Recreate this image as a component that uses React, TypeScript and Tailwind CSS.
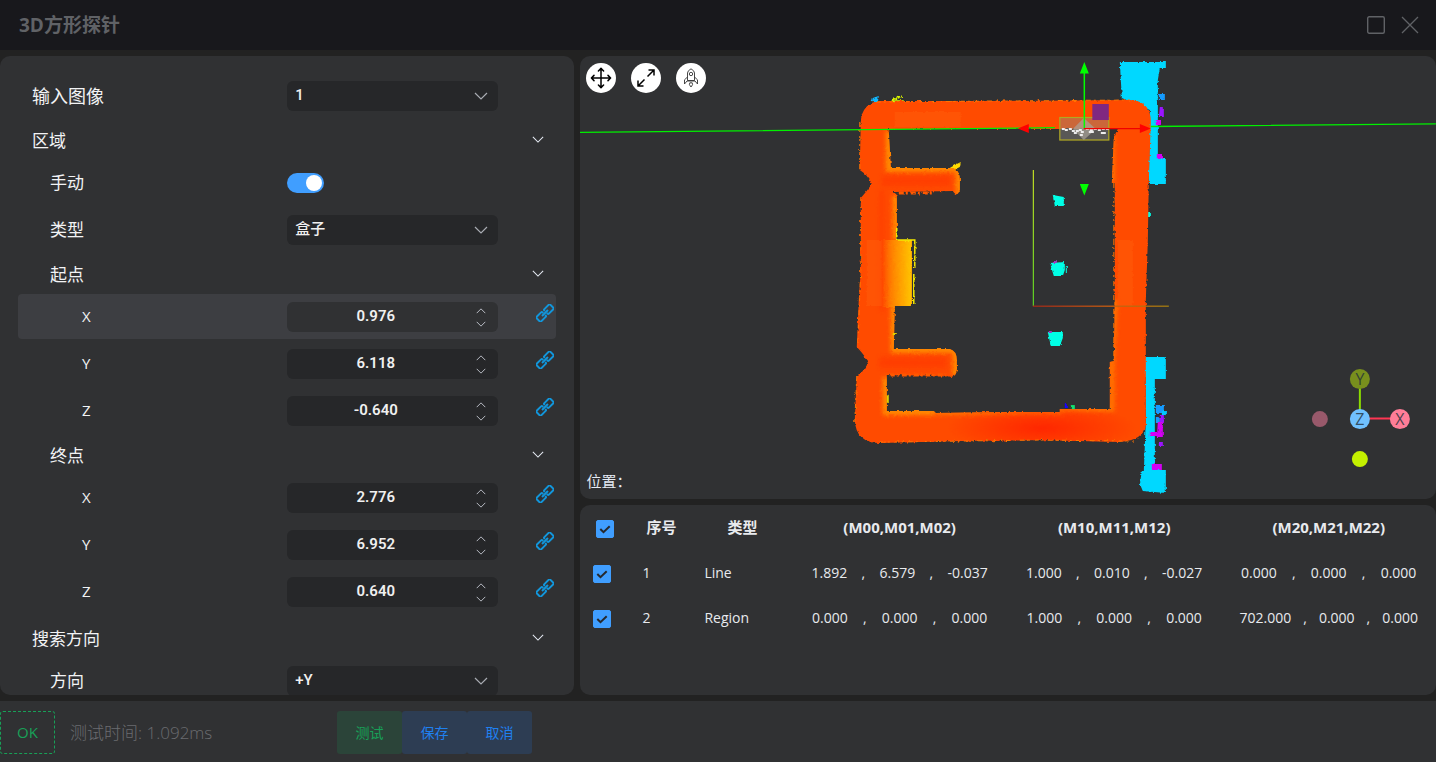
import React, { useId, useState } from "react";

const CJK = "font-['Open_Sans','Noto_Sans_CJK_SC',sans-serif]";
const CONTROL_FONT = "font-['Roboto','Noto_Sans_CJK_SC',sans-serif]";

function Chevron({ className, up = false }: { className: string; up?: boolean }) {
  return (
    <svg viewBox="0 0 14 8" className={className} fill="none" stroke="currentColor" strokeWidth="1.2" aria-hidden="true">
      <path d={up ? "M1 7 L7 1 L13 7" : "M1 1 L7 7 L13 1"} />
    </svg>
  );
}

function LinkIcon() {
  return (
    <svg viewBox="0 0 18 18" className="size-[18px]" fill="none" stroke="#1296db" strokeWidth="2" aria-hidden="true">
      <g transform="rotate(-45 9 9)">
        <path d="M7.700 7.800 V6.800 Q7.700 5.800 6.700 5.800 H0.400 Q-0.600 5.800 -0.600 6.800 V11.200 Q-0.600 12.200 0.400 12.200 H6.700 Q7.700 12.200 7.700 11.200 V10.600" />
        <path d="M10.300 10.200 V11.200 Q10.300 12.200 11.300 12.200 H17.600 Q18.600 12.200 18.600 11.200 V6.800 Q18.600 5.800 17.600 5.800 H11.300 Q10.300 5.800 10.300 6.800 V7.400" />
        <path d="M4.800 9 H13.200" />
      </g>
    </svg>
  );
}

type RowProps = { label: string; id: string; level?: number; active?: boolean; linked?: boolean; children: React.ReactNode };

function Row({ label, id, level = 1, active, linked, children }: RowProps) {
  const pad = level === 0 ? "pl-[14px] text-lg" : level === 1 ? "pl-8 text-[17px]" : "pl-16 text-[15px]";
  return (
    <div className={`grid h-[45px] shrink-0 grid-cols-2 items-center rounded ${active ? "bg-[#3d3e42]" : ""}`}>
      <label htmlFor={id} className={pad}>{label}</label>
      <div className="flex items-center">
        <div className="min-w-0 flex-1">{children}</div>
        <div className="flex w-[58px] justify-end pr-[2px] pb-2">
          {linked && (
            <button type="button" aria-label={`${label} 链接`}><LinkIcon /></button>
          )}
        </div>
      </div>
    </div>
  );
}

function SelectRow({ label, options, level }: { label: string; options: string[]; level?: number }) {
  const id = useId();
  return (
    <Row label={label} id={id} level={level}>
      <div className="grid items-center">
        <select id={id} className={`col-start-1 row-start-1 h-[30px] w-full appearance-none rounded-md bg-[#262729] pr-8 pl-2 text-[15px] font-medium text-[#f0f0f0] outline-none ${CONTROL_FONT}`}>
          {options.map((o) => <option key={o}>{o}</option>)}
        </select>
        <Chevron className="pointer-events-none col-start-1 row-start-1 mr-[10px] h-2 w-[14px] justify-self-end text-[#a8abb2]" />
      </div>
    </Row>
  );
}

function NumberRow({ label, initial, active }: { label: string; initial: string; active?: boolean }) {
  const id = useId();
  const [value, setValue] = useState(initial);
  const step = (d: number) => setValue((Number(value) + d).toFixed(3));
  return (
    <Row label={label} id={id} level={2} active={active} linked>
      <div className={`flex h-[30px] items-center rounded-md ${active ? "bg-[#303133]" : "bg-[#262729]"}`}>
        <input
          id={id}
          inputMode="decimal"
          value={value}
          onChange={(e) => setValue(e.target.value)}
          className={`w-0 min-w-0 flex-1 bg-transparent text-center text-[15px] font-semibold text-[#f0f0f0] outline-none ${CONTROL_FONT}`}
        />
        <div className="flex w-[34px] flex-col items-center gap-[7px] pt-px text-[#cfd3dc]">
          <button type="button" aria-label="增加" onClick={() => step(0.001)}><Chevron up className="block h-[6px] w-[10px]" /></button>
          <button type="button" aria-label="减少" onClick={() => step(-0.001)}><Chevron className="block h-[6px] w-[10px]" /></button>
        </div>
      </div>
    </Row>
  );
}

function GroupHeader({ label, level = 0 }: { label: string; level?: number }) {
  return (
    <button type="button" aria-expanded="true" className={`flex h-[42px] w-full items-center justify-between pr-3 text-[17px] ${level === 0 ? "pl-[14px]" : "pl-8"}`}>
      <span className="pt-[3px]">{label}</span>
      <Chevron className="h-[7px] w-3 text-[#e5eaf3]" />
    </button>
  );
}

function Fields({ children }: { children: React.ReactNode }) {
  return <div className="flex flex-col gap-[2px]">{children}</div>;
}

function ParameterPanel() {
  const manual = useId();
  return (
    <section className="w-2/5 shrink-0 overflow-hidden rounded-[10px] bg-[#303133] px-[18px] pt-[17px]">
      <SelectRow label="输入图像" options={["1"]} level={0} />
      <GroupHeader label="区域" />
      <Fields>
        <Row label="手动" id={manual}>
          <label className="flex h-5 w-[37px] items-center rounded-full bg-[#626366] p-[2px] has-checked:justify-end has-checked:bg-[#409eff]">
            <input id={manual} type="checkbox" role="switch" defaultChecked className="size-4 appearance-none rounded-full bg-white" />
          </label>
        </Row>
        <SelectRow label="类型" options={["盒子"]} />
      </Fields>
      <GroupHeader label="起点" level={1} />
      <Fields>
        <NumberRow label="X" initial="0.976" active />
        <NumberRow label="Y" initial="6.118" />
        <NumberRow label="Z" initial="-0.640" />
      </Fields>
      <GroupHeader label="终点" level={1} />
      <Fields>
        <NumberRow label="X" initial="2.776" />
        <NumberRow label="Y" initial="6.952" />
        <NumberRow label="Z" initial="0.640" />
      </Fields>
      <div className="pt-[2px]">
        <GroupHeader label="搜索方向" />
        <SelectRow label="方向" options={["+Y"]} />
      </div>
    </section>
  );
}

const FRAME =
  "M861 122 Q862 103 880 101 L1000 101 L1130 100 Q1151 101 1151 122 L1149 180 L1148 240 L1146 300 V425 Q1144 440 1120 442 L1040 440 L960 441 L880 443 Q856 443 855 420 L857 376 Q863 373 869 362 Q862 352 857 347 L859 300 L861 270 V198 Q868 190 872 184 Q868 175 860 170 Z " +
  "M885 129 L889 131 L891 168 H953 Q960 170 960 180 V190 Q957 198 953 191 L893 192 L897 196 V240 H912 V306 H895 L894 349 H950 Q957 351 957 360 V370 Q956 379 948 376 L887 375 V411 H934 L936 413 L1000 412 H1060 V409 H1110 V362 L1114 361 L1115 300 V183 H1112 L1114 137 L1118 129 Z";

const SCAN_DOTS = [
  [1062, 128], [1065, 129], [1069, 128], [1072, 130], [1076, 130], [1079, 129], [1074, 132], [1081, 131], [1080, 134],
  [1086, 128], [1090, 129], [1094, 128], [1098, 129], [1102, 128], [1106, 128], [1089, 131], [1101, 132], [1103, 132], [1091, 131],
];

function PointCloud() {
  return (
    <svg viewBox="580 56 856 443" preserveAspectRatio="xMidYMid slice" className="col-start-1 row-start-1 block h-full min-h-0 w-full" role="img" aria-label="点云">
      <defs>
        <filter id="rough" x="-5%" y="-5%" width="110%" height="110%" colorInterpolationFilters="sRGB">
          <feTurbulence type="fractalNoise" baseFrequency="0.3" numOctaves="2" seed="4" result="n" />
          <feDisplacementMap in="SourceGraphic" in2="n" scale="3" xChannelSelector="R" yChannelSelector="G" />
        </filter>
        <filter id="soft"><feGaussianBlur stdDeviation="2" /></filter>
        <linearGradient id="shelf" x1="0" x2="1"><stop offset="0" stopColor="#ff5200" /><stop offset="0.4" stopColor="#ff8c00" /><stop offset="1" stopColor="#ffcc00" /></linearGradient>
        <radialGradient id="hot"><stop offset="0" stopColor="#ff2000" /><stop offset="1" stopColor="#ff2000" stopOpacity="0" /></radialGradient>
        <linearGradient id="axisY" x1="0" y1="0" x2="0" y2="1"><stop offset="0" stopColor="#e0ff20" /><stop offset="1" stopColor="#60f020" /></linearGradient>
        <linearGradient id="axisX" gradientUnits="userSpaceOnUse" x1="1033" y1="0" x2="1169" y2="0"><stop offset="0" stopColor="#a02818" /><stop offset="0.6" stopColor="#c86010" /><stop offset="1" stopColor="#a07c10" /></linearGradient>
        <clipPath id="frameClip"><path d={FRAME} clipRule="evenodd" /></clipPath>
      </defs>
      <g filter="url(#rough)">
        <path fill="#00d8ff" d="M1120 62 H1166 V68 H1160 L1158 80 V158 H1166 V184 H1149 L1150 110 L1122 98 Z M1143 357 H1166 V379 H1155 V470 H1166 V493 L1143 491 L1140 484 L1142 471 H1144 L1146 420 V378 H1143 Z" />
        <path fill="#159bff" d="M1159 94 h6 v6 h-6z M1156 405 h8 v8 h-8z M1156 417 h4 v6 h-4z" />
        <path fill="#00c8ff" d="M1162 411 h5 v4 h-5z" />
        <path fill="#9b14ff" d="M1160 107 h4 v10 h-5z M1160 415 h4 v8 h-4z M1159 442 h4 v4 h-4z" />
        <path fill="#d400f5" d="M1156 120 h6 v5 h-6z M1157 154 h6 v5 h-6z M1158 422 h5 v15 h-6z M1150 432 h8 v4 h-8z M1152 464 l10 0 v6 h-10z" />
        <path fill="#00ffe6" d="M1053 195 L1064 197 V206 H1055 Z M1050 263 L1065 262 V270 L1063 276 H1054 Z M1048 332 H1063 V338 L1060 346 H1051 Z M1066 266 v7 h1 v-7z M1148 212 h3 v5 h-3z" />
        <path fill="#a038c0" d="M1053 261 h4 v2 h-4z M1049 331 h3 v2 h-3z" />
        <path fill="#10b8ff" d="M873 98 l6 -2 l-1 7 l-6 -1z" />
        <path fill="none" stroke="#d8f400" strokeWidth="1.6" d="M891 101 L904 101 M892 100 L902 96 M896 101 L898 96" />
        <path fill="#ffdc00" d="M950 168 L955 165 L961 162 L960 167 L954 170 Z" />
        <path fill="#ff4b00" fillRule="evenodd" d={FRAME} />
        <g clipPath="url(#frameClip)">
          <rect x="882" y="240" width="32" height="67" fill="url(#shelf)" />
          <path fill="none" stroke="#ff8a00" strokeWidth="8" filter="url(#soft)" d="M890 131 V168 H960 V196 M897 196 V240 M895 306 V349 H957 V376 M887 377 V411 H936" />
          <path fill="none" stroke="#ff7800" strokeWidth="5" filter="url(#soft)" d="M936 412 H1060 V409 H1112 V361 L1115 300 M1112 183 V135" />
          <ellipse cx="1042" cy="428" rx="95" ry="24" fill="url(#hot)" opacity="0.85" />
          <path fill="#ff3600" opacity="0.55" filter="url(#soft)" d="M882 176 H950 V186 H882z M880 357 H946 V368 H880z M880 190 h4 v120 h-4z" />
          <path fill="#ff5a08" opacity="0.6" d="M895 112 h66 v15 h-66z M867 240 h15 v66 h-15z M1118 240 h15 v66 h-15z" />
        </g>
        <path fill="none" stroke="#ff7400" strokeWidth="1" strokeDasharray="5 3 2 4" d="M876 102 L1000 101 L1130 100 M860 122 V170 M861 198 V270 L858 346 M857 376 L855 422 M880 442 L1040 440 L1135 441 M1114 183 V360" />
        <path fill="none" stroke="#ff5800" strokeWidth="3" strokeDasharray="5 2 2 3" d="M899 193 H934 M890 375 H952" />
        <path fill="none" stroke="#f4ea00" strokeWidth="1.5" d="M897 228 V240 H915 V268 M914 274 V304" />
        <path fill="#e0d000" d="M887 394 l2 1 v8 h-2z M894 333 h3 v2 h-3z" />
        <path fill="#1800ff" d="M1065 404 h3 v4 h-3z" />
        <path fill="#10e070" d="M1071 405 h4 v4 h-4z" />
      </g>
      <rect x="1033" y="170" width="1" height="136" fill="url(#axisY)" />
      <rect x="1033" y="305.5" width="136" height="1.3" fill="url(#axisX)" />
      <path d="M580 132.3 L1055 127.7 M1151 126.5 L1436 123.8" stroke="#00f000" strokeWidth="1.3" fill="none" />
      <rect x="1060" y="117.5" width="49" height="22.5" fill="#8b8a80" fillOpacity="0.45" stroke="#b0a824" strokeWidth="1.2" />
      <path fill="#aaa49a" fillOpacity="0.7" d="M1084 118 L1096 129 L1084 140 L1073 129 Z" />
      <g fill="#eeeeee">{SCAN_DOTS.map(([x, y]) => <rect key={`${x}-${y}`} x={x} y={y} width="3" height="2" />)}</g>
      <path d="M1084.5 128 V72" stroke="#00ff00" strokeWidth="1.5" />
      <path d="M1084.5 62 L1089 73.5 H1080 Z M1084.5 195.5 L1089 184 H1080 Z" fill="#00ff00" />
      <path d="M1084 128.7 H1142" stroke="#f00000" strokeWidth="1.3" />
      <path d="M1151 128.5 L1140 124 V133 Z M1018 128.5 L1029 124 V133 Z" fill="#ff0000" />
      <rect x="1092.5" y="104" width="16.5" height="16" fill="#802880" />
      <path d="M1360 388 V410" stroke="#8adb00" strokeWidth="2" />
      <path d="M1368 418.5 H1392" stroke="#ff3653" strokeWidth="2" />
      <circle cx="1320" cy="419" r="8" fill="#98596b" />
      <circle cx="1360" cy="459" r="8" fill="#c4f000" />
      <circle cx="1360" cy="379" r="10" fill="#788f1d" />
      <circle cx="1360" cy="419" r="10" fill="#70c1ff" />
      <circle cx="1400" cy="419" r="10" fill="#ff7d97" />
      <g className="font-['Open_Sans',sans-serif] text-base" fill="#22303a" fillOpacity="0.8" textAnchor="middle">
        <text x="1360" y="385">Y</text>
        <text x="1360" y="425">Z</text>
        <text x="1400" y="425">X</text>
      </g>
    </svg>
  );
}

function RoundButton({ label, children }: { label: string; children: React.ReactNode }) {
  return (
    <button type="button" aria-label={label} className="flex size-[30px] items-center justify-center rounded-full bg-white text-black">
      {children}
    </button>
  );
}

function Viewer() {
  return (
    <section className="grid min-h-0 flex-[7] grid-cols-1 grid-rows-1 overflow-hidden rounded-[10px] bg-[#303133]">
      <PointCloud />
      <div className="z-10 col-start-1 row-start-1 flex flex-col justify-between px-[6px] py-[7px]">
        <div className="flex gap-[15px]">
          <RoundButton label="移动">
            <svg viewBox="0 0 22 22" className="size-[22px]" fill="none" stroke="currentColor" strokeWidth="1.5" strokeLinecap="round" strokeLinejoin="round">
              <path d="M11 1.5 V20.5 M1.5 11 H20.5 M8.4 4 L11 1.4 L13.6 4 M8.4 18 L11 20.6 L13.6 18 M4 8.4 L1.4 11 L4 13.6 M18 8.4 L20.6 11 L18 13.6" />
            </svg>
          </RoundButton>
          <RoundButton label="全屏">
            <svg viewBox="0 0 20 20" className="size-5" fill="none" stroke="currentColor" strokeWidth="1.5">
              <path d="M12.5 2 H18 V7.5 M18 2 L11.5 8.5 M7.5 18 H2 V12.5 M2 18 L8.5 11.5" />
            </svg>
          </RoundButton>
          <RoundButton label="重置视角">
            <svg viewBox="0 0 20 22" className="h-[22px] w-5" fill="none" stroke="#333333" strokeWidth="0.9" strokeLinejoin="round">
              <path d="M6.5 13.5 V6 Q6.5 3.8 10 1.8 Q13.5 3.8 13.5 6 V13.5 Z" />
              <circle cx="10" cy="7" r="1.7" />
              <path d="M6.5 10 L3.5 12.8 V17 L6 14 H14 L16.5 17 V12.8 L13.5 10" />
              <path d="M8.8 15.8 Q7.5 17.5 10 20 Q12.5 17.5 11.2 15.8 Z" />
            </svg>
          </RoundButton>
        </div>
        <p className="text-[15px] leading-[22px] text-[#e5eaf3]">位置：</p>
      </div>
    </section>
  );
}

const RESULTS = [
  { no: 1, type: "Line", m: [["1.892", "6.579", "-0.037"], ["1.000", "0.010", "-0.027"], ["0.000", "0.000", "0.000"]] },
  { no: 2, type: "Region", m: [["0.000", "0.000", "0.000"], ["1.000", "0.000", "0.000"], ["702.000", "0.000", "0.000"]] },
];

function Check({ label }: { label: string }) {
  return (
    <span className="inline-grid align-middle">
      <input type="checkbox" defaultChecked aria-label={label} className="peer col-start-1 row-start-1 size-[18px] appearance-none rounded-[2px] border border-[#6c6e72] checked:border-[#409eff] checked:bg-[#409eff]" />
      <svg viewBox="0 0 18 18" className="pointer-events-none invisible col-start-1 row-start-1 size-[18px] peer-checked:visible" fill="none" stroke="#26292e" strokeWidth="2" aria-hidden="true">
        <path d="M4.3 9 L7.5 12.2 L13.7 6.2" />
      </svg>
    </span>
  );
}

function ResultTable() {
  return (
    <section className="min-h-0 flex-[3] overflow-hidden rounded-[10px] bg-[#303133] text-sm text-[#e8eaee]">
      <table className="w-full table-fixed border-collapse">
        <colgroup>
          <col className="w-[50px]" />
          <col className="w-[62px]" />
          <col className="w-[100px]" />
          <col /><col /><col />
        </colgroup>
        <thead>
          <tr className="h-[45px] text-[15px] font-bold">
            <th><Check label="全选" /></th>
            <th>序号</th>
            <th>类型</th>
            <th>(M00,M01,M02)</th>
            <th>(M10,M11,M12)</th>
            <th>(M20,M21,M22)</th>
          </tr>
        </thead>
        <tbody>
          {RESULTS.map((r) => (
            <tr key={r.no} className="h-[45px]">
              <td className="pl-[13px]"><Check label={`选择 ${r.no}`} /></td>
              <td className="pl-3">{r.no}</td>
              <td className="pl-3">{r.type}</td>
              {r.m.map((v, i) => (
                <td key={i} className="px-3">
                  <div className="flex justify-around">
                    <span>{v[0]}</span><span>,</span><span>{v[1]}</span><span>,</span><span>{v[2]}</span>
                  </div>
                </td>
              ))}
            </tr>
          ))}
        </tbody>
      </table>
    </section>
  );
}

export default function App() {
  return (
    <div className={`flex h-screen flex-col overflow-hidden bg-[#222222] text-[#f2f3f5] ${CJK}`}>
      <header className="flex h-[50px] shrink-0 items-center justify-between bg-[#18181c] pr-[17px] pl-[19px] text-[#606266]">
        <h1 className="text-[19px] font-bold">3D方形探针</h1>
        <div className="flex gap-4">
          <button type="button" aria-label="最大化">
            <svg viewBox="0 0 18 18" className="size-[18px]" fill="none" stroke="currentColor" strokeWidth="1.4"><rect x="0.7" y="0.7" width="16.6" height="16.6" rx="1.5" /></svg>
          </button>
          <button type="button" aria-label="关闭">
            <svg viewBox="0 0 18 18" className="size-[18px]" fill="none" stroke="currentColor" strokeWidth="1.3"><path d="M1 1 L17 17 M17 1 L1 17" /></svg>
          </button>
        </div>
      </header>
      <main className="flex min-h-0 flex-1 gap-[6px] py-[6px]">
        <ParameterPanel />
        <div className="flex min-w-0 flex-1 flex-col gap-[6px]">
          <Viewer />
          <ResultTable />
        </div>
      </main>
      <footer className="flex h-[61px] shrink-0 items-center bg-[#303133] pt-[2px]">
        <div className="flex w-[337px] items-center gap-[15px]">
          <output className="flex h-[43px] w-[55px] items-center justify-center rounded-[3px] border border-dashed border-[#18a058] text-[15px] text-[#18a058]">OK</output>
          <span className="text-[17px] font-light text-[#6b6c70]">测试时间: 1.092ms</span>
        </div>
        <button type="button" className="h-[43px] w-[65px] rounded-[3px] bg-[#2b4439] text-sm text-[#18a058]">测试</button>
        <button type="button" className="h-[43px] w-[65px] rounded-[3px] bg-[#2d3d53] text-sm text-[#2080f0]">保存</button>
        <button type="button" className="h-[43px] w-[65px] rounded-[3px] bg-[#2d3d53] text-sm text-[#2080f0]">取消</button>
      </footer>
    </div>
  );
}
